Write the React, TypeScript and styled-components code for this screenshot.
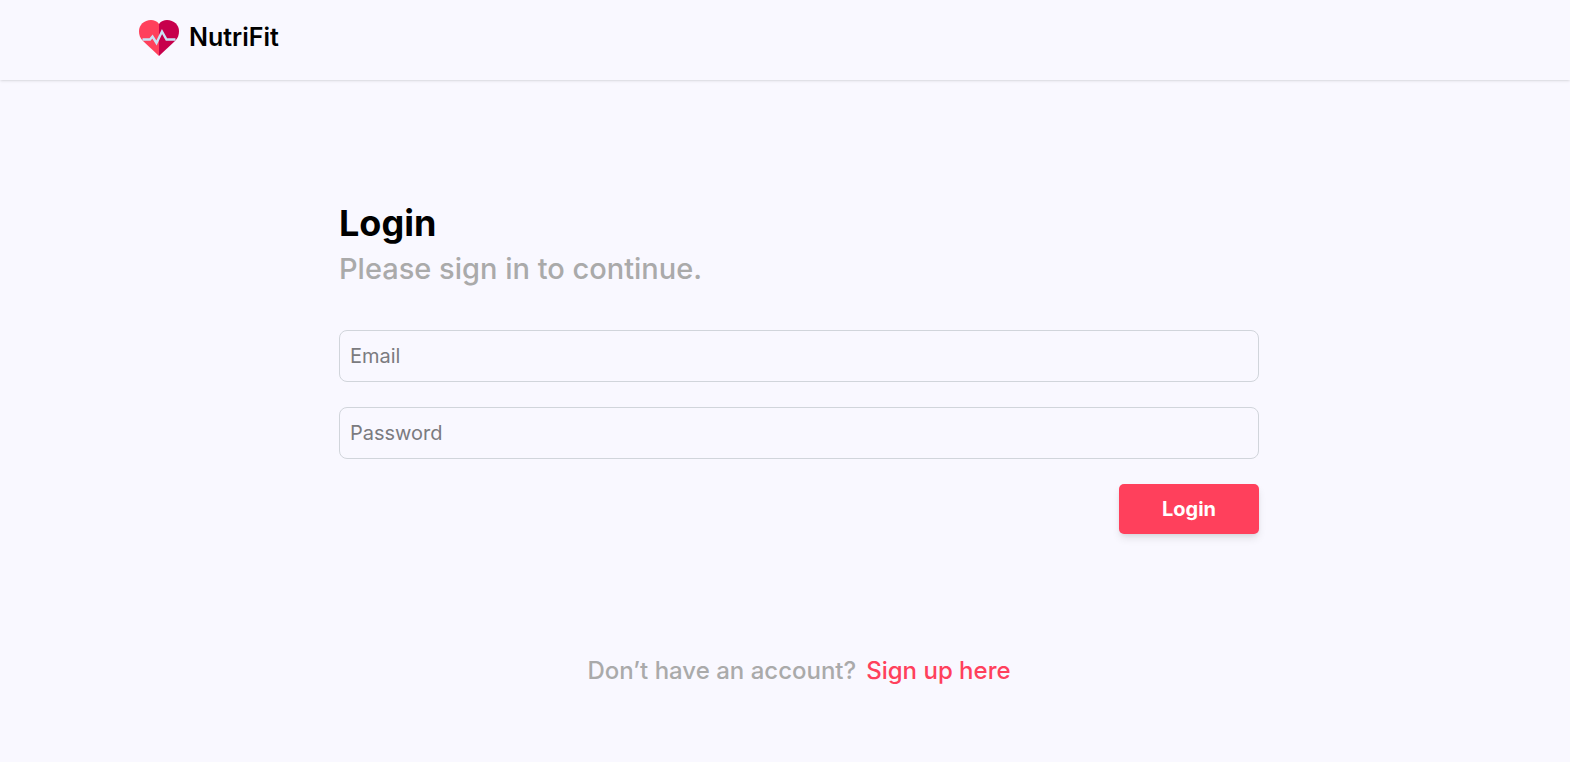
import React from "react";
import styled, { createGlobalStyle } from "styled-components";

const GlobalStyle = createGlobalStyle`
  *, *::before, *::after { box-sizing: border-box; }
  body {
    margin: 0;
    background: #f9f8ff;
    color: #000;
    font-family: Inter, "Liberation Sans", sans-serif;
  }
`;

const Header = styled.header`
  display: flex;
  height: 80px;
  padding: 0 139px 4px;
  box-shadow: 0 1px 3px rgba(0, 0, 0, 0.1), 0 1px 2px -1px rgba(0, 0, 0, 0.1);
`;

const Brand = styled.a`
  display: flex;
  align-items: center;
  gap: 10px;
  color: #000;
  font-size: 25px;
  line-height: 32px;
  font-weight: 600;
  text-decoration: none;
`;

const BrandName = styled.span`
  padding-bottom: 2px;
`;

const Main = styled.main`
  max-width: 948px;
  margin: 0 auto;
  padding: 120px 0 60px 28px;
`;

const Title = styled.h1`
  margin: 0;
  font-size: 36px;
  line-height: 46px;
  font-weight: 700;
`;

const Subtitle = styled.p`
  margin: 0 0 38px;
  color: #aaa;
  font-size: 29px;
  line-height: 46px;
  font-weight: 500;
`;

const Form = styled.form`
  display: flex;
  flex-direction: column;
  gap: 25px;
`;

const Field = styled.input`
  width: 100%;
  height: 52px;
  padding: 0 10px;
  border: 1px solid #d1d5db;
  border-radius: 8px;
  background: transparent;
  font: 400 20px Inter, sans-serif;
  &::placeholder { color: #7b7b80; }
`;

const SubmitButton = styled.button`
  align-self: flex-end;
  width: 140px;
  height: 50px;
  border: 0;
  border-radius: 5px;
  background: #ff405c;
  color: #fff;
  font: 700 20px Inter, sans-serif;
  box-shadow: 0 5px 8px -1px rgba(0, 0, 0, 0.1), 0 2px 5px -2px rgba(0, 0, 0, 0.1);
`;

const SignUp = styled.p`
  display: flex;
  justify-content: center;
  gap: 10px;
  margin: 119px 0 0;
  color: #aaa;
  font-size: 24px;
  line-height: 36px;
  font-weight: 500;
`;

const SignUpLink = styled.a`
  color: #ff405c;
  text-decoration: none;
`;

const Logo = () => (
  <svg width="40" height="40" viewBox="0 0 40 40" aria-hidden="true">
    <path d="M20 6C18 3 15 2 12 2C5 2 0 7 0 13C0 17 1 20 4 23L20 38L21 20Z" fill="#ff405c" />
    <path d="M20 6C22 3 25 2 28 2C35 2 40 7 40 13C40 17 39 20 36 23L20 38Z" fill="#c7004c" />
    <path d="M3.5 21.5H11L13.5 18.5L17.5 25L23 13.5L27.5 21.5H36.5" fill="none" stroke="#c9e2f5" strokeWidth="2.4" />
  </svg>
);

export default function App() {
  return (
    <>
      <GlobalStyle />
      <Header>
        <Brand href="#"><Logo /><BrandName>NutriFit</BrandName></Brand>
      </Header>
      <Main>
        <Title>Login</Title>
        <Subtitle>Please sign in to continue.</Subtitle>
        <Form onSubmit={(e) => e.preventDefault()}>
          <Field type="email" placeholder="Email" aria-label="Email" />
          <Field type="password" placeholder="Password" aria-label="Password" />
          <SubmitButton type="submit">Login</SubmitButton>
        </Form>
        <SignUp>
          Don’t have an account?
          <SignUpLink href="#signup">Sign up here</SignUpLink>
        </SignUp>
      </Main>
    </>
  );
}
